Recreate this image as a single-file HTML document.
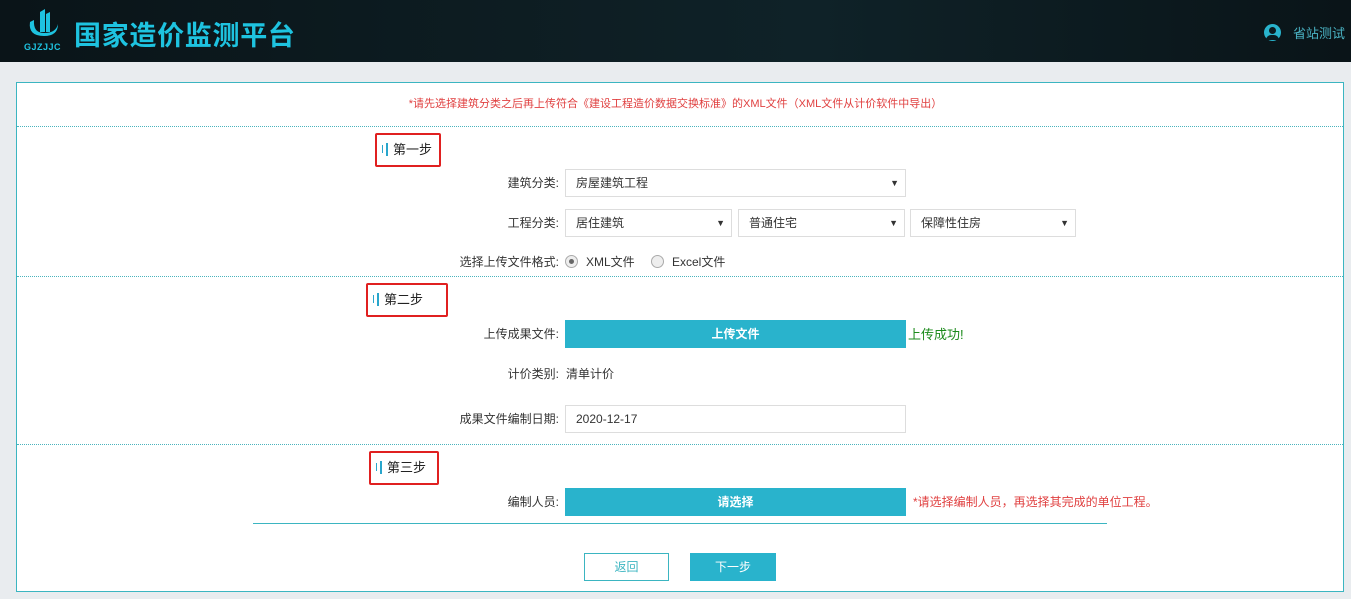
<!DOCTYPE html>
<html><head><meta charset="utf-8"><style>
*{margin:0;padding:0;box-sizing:border-box}
body{width:1351px;height:599px;background:#e9ecef;font-family:"Liberation Sans","Noto Sans CJK SC",sans-serif;font-size:12px;color:#333;position:relative;overflow:hidden}
.a{position:absolute}
.hdr{left:0;top:0;width:1351px;height:62px;background:linear-gradient(90deg,#0a1418,#0f2228 60%,#0a1418)}
.panel{left:16px;top:82px;width:1328px;height:510px;background:#fff;border:1px solid #3bb5c1}
.dot{height:0;border-top:1px dotted #4ab3bd;left:17px;width:1326px}
.lbl{text-align:right;width:200px;font-size:12px;color:#333}
.sel{border:1px solid #ddd;background:#fff;height:28px;padding:0 10px;line-height:26px;font-size:12px;color:#333}
.sel:after{content:"▼";position:absolute;right:6px;top:0;font-size:9px}
.sel.nd:after{content:none}
.step{border:2px solid #e02020;border-radius:2px;height:34px;width:66px;font-size:13px;color:#222;line-height:30px;padding-left:16px}
.step i{position:absolute;left:5px;top:10px;width:1px;height:8px;background:#29a6cc}
.step b{position:absolute;left:9px;top:8px;width:2px;height:13px;background:#29a6cc}
.btn{background:#29b3cc;color:#fff;text-align:center;font-size:12px;font-weight:bold}
.radio{width:13px;height:13px;border-radius:50%;border:1px solid #aaa;background:#eee}
</style></head><body>
<div class="a hdr"></div>
<svg class="a" style="left:26px;top:8px" width="36" height="34" viewBox="0 0 36 34"><path d="M14 4 L19 1 L19 24 L14 24Z M20 6 L24 4 L24 24 L20 24Z" fill="#1ec3e0"/><path d="M4 14 Q2 28 18 28 Q32 28 32 16 Q30 25 18 25 Q7 25 8 12Z" fill="#1ec3e0"/></svg>
<div class="a" style="left:24px;top:42px;font-size:9px;font-weight:bold;color:#1ec3e0;letter-spacing:0.5px">GJZJJC</div>
<div class="a" style="left:74px;top:14px;font-size:27px;font-weight:bold;color:#1ec3e0;letter-spacing:0.7px">国家造价监测平台</div>
<div class="a" style="left:1264px;top:24px;width:17px;height:17px;border-radius:50%;background:#29b3cc"></div>
<div class="a" style="left:1269px;top:27px;width:7px;height:7px;border-radius:50%;background:#0b1a1e"></div>
<div class="a" style="left:1266px;top:35px;width:13px;height:5px;border-radius:6px 6px 0 0;background:#0b1a1e"></div>
<div class="a" style="left:1293px;top:23px;font-size:13px;color:#4ab3c4">省站测试</div>

<div class="a panel"></div>
<div class="a" style="left:0;width:1351px;top:95px;text-align:center;color:#e04040;font-size:11px">*请先选择建筑分类之后再上传符合《建设工程造价数据交换标准》的XML文件（XML文件从计价软件中导出）</div>
<div class="a dot" style="top:126px"></div>
<div class="a dot" style="top:276px"></div>
<div class="a dot" style="top:444px"></div>

<div class="a step" style="left:375px;top:133px"><i></i><b></b>第一步</div>
<div class="a lbl" style="left:359px;top:174px">建筑分类:</div>
<div class="a sel" style="left:565px;top:169px;width:341px">房屋建筑工程</div>
<div class="a lbl" style="left:359px;top:214px">工程分类:</div>
<div class="a sel" style="left:565px;top:209px;width:167px">居住建筑</div>
<div class="a sel" style="left:738px;top:209px;width:167px">普通住宅</div>
<div class="a sel" style="left:910px;top:209px;width:166px">保障性住房</div>
<div class="a lbl" style="left:359px;top:253px">选择上传文件格式:</div>
<div class="a radio" style="left:565px;top:255px"><div style="margin:3px;width:5px;height:5px;border-radius:50%;background:#666"></div></div>
<div class="a" style="left:586px;top:253px">XML文件</div>
<div class="a radio" style="left:651px;top:255px"></div>
<div class="a" style="left:672px;top:253px">Excel文件</div>

<div class="a step" style="left:366px;top:283px;width:82px"><i></i><b></b>第二步</div>
<div class="a lbl" style="left:359px;top:325px">上传成果文件:</div>
<div class="a btn" style="left:565px;top:320px;width:341px;height:28px;line-height:28px">上传文件</div>
<div class="a" style="left:908px;top:324px;color:#1a8a1a;font-size:13px">上传成功!</div>
<div class="a lbl" style="left:359px;top:365px">计价类别:</div>
<div class="a" style="left:566px;top:365px">清单计价</div>
<div class="a lbl" style="left:359px;top:410px">成果文件编制日期:</div>
<div class="a sel nd" style="left:565px;top:405px;width:341px">2020-12-17</div>

<div class="a step" style="left:369px;top:451px;width:70px"><i></i><b></b>第三步</div>
<div class="a lbl" style="left:359px;top:493px">编制人员:</div>
<div class="a btn" style="left:565px;top:488px;width:341px;height:28px;line-height:28px">请选择</div>
<div class="a" style="left:913px;top:493px;color:#e04040;font-size:12px">*请选择编制人员，再选择其完成的单位工程。</div>
<div class="a" style="left:253px;top:523px;width:854px;height:1px;background:#3bb5c1"></div>
<div class="a" style="left:584px;top:553px;width:85px;height:28px;border:1px solid #3bb5c1;color:#3bb5c1;text-align:center;line-height:26px">返回</div>
<div class="a btn" style="left:690px;top:553px;width:86px;height:28px;line-height:28px;font-weight:normal">下一步</div>
</body></html>
